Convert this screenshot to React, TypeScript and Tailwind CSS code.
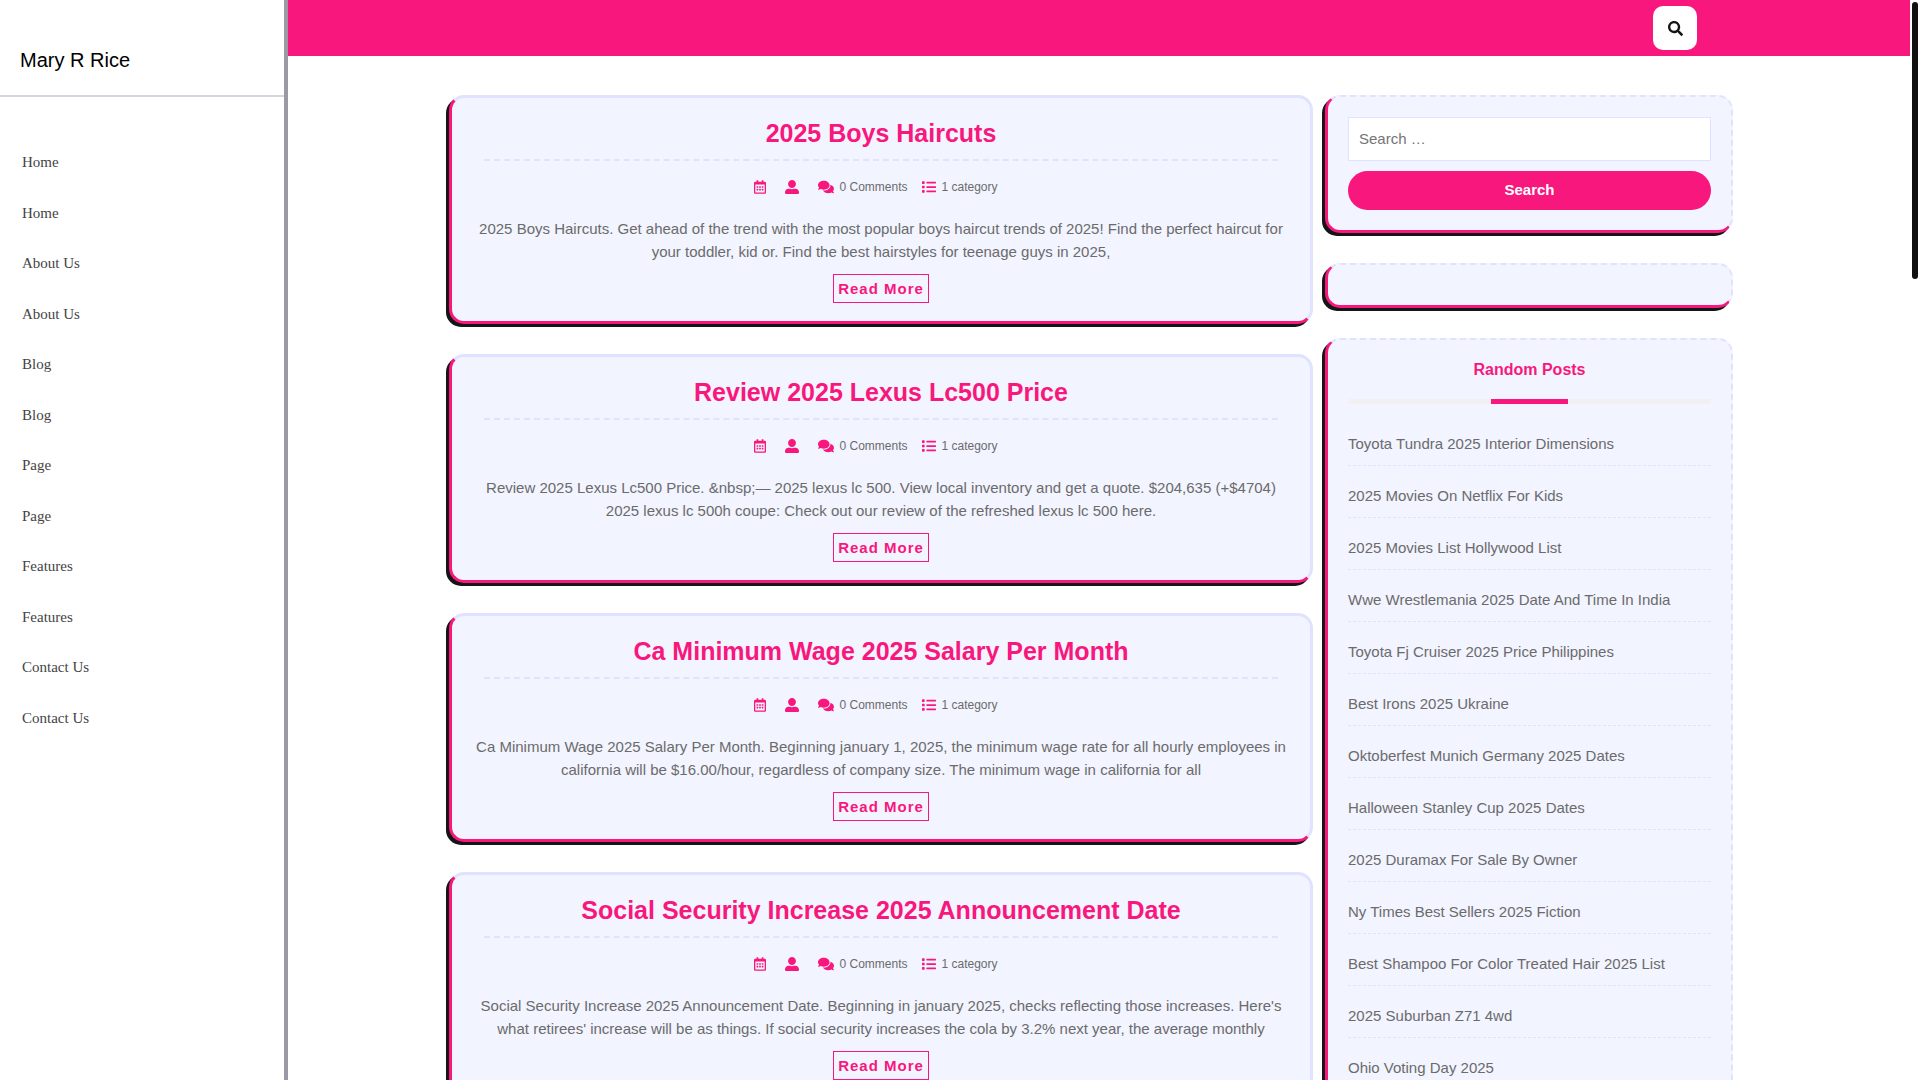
import React from "react";
import {
  FaComments,
  FaList,
  FaRegCalendarAlt,
  FaSearch,
  FaUserAlt,
} from "react-icons/fa";

const menu = ["Home", "About Us", "Blog", "Page", "Features", "Contact Us"];

const posts = [
  {
    title: "2025 Boys Haircuts",
    text: "2025 Boys Haircuts. Get ahead of the trend with the most popular boys haircut trends of 2025! Find the perfect haircut for your toddler, kid or. Find the best hairstyles for teenage guys in 2025,",
  },
  {
    title: "Review 2025 Lexus Lc500 Price",
    text: "Review 2025 Lexus Lc500 Price. &nbsp;— 2025 lexus lc 500. View local inventory and get a quote. $204,635 (+$4704) 2025 lexus lc 500h coupe: Check out our review of the refreshed lexus lc 500 here.",
  },
  {
    title: "Ca Minimum Wage 2025 Salary Per Month",
    text: "Ca Minimum Wage 2025 Salary Per Month. Beginning january 1, 2025, the minimum wage rate for all hourly employees in california will be $16.00/hour, regardless of company size. The minimum wage in california for all",
  },
  {
    title: "Social Security Increase 2025 Announcement Date",
    text: "Social Security Increase 2025 Announcement Date. Beginning in january 2025, checks reflecting those increases. Here's what retirees' increase will be as things. If social security increases the cola by 3.2% next year, the average monthly",
  },
];

const randomPosts = [
  "Toyota Tundra 2025 Interior Dimensions",
  "2025 Movies On Netflix For Kids",
  "2025 Movies List Hollywood List",
  "Wwe Wrestlemania 2025 Date And Time In India",
  "Toyota Fj Cruiser 2025 Price Philippines",
  "Best Irons 2025 Ukraine",
  "Oktoberfest Munich Germany 2025 Dates",
  "Halloween Stanley Cup 2025 Dates",
  "2025 Duramax For Sale By Owner",
  "Ny Times Best Sellers 2025 Fiction",
  "Best Shampoo For Color Treated Hair 2025 List",
  "2025 Suburban Z71 4wd",
  "Ohio Voting Day 2025",
];

function Sidebar() {
  return (
    <aside className="w-72 shrink-0 border-r-4 border-[#9c98a6]">
      <div className="border-b-2 border-[#d3d6e0] px-5 pt-[45px] pb-5">
        <a href="#" className="block text-xl leading-[30px] text-black">
          Mary R Rice
        </a>
      </div>
      <nav className="px-[22px] pt-10 font-['Liberation_Serif',serif] text-[15px] text-[#444]">
        <ul>
          {menu.map((item) => (
            <li key={item}>
              <a href="#" className="flex h-[51px] items-center">{item}</a>
              <a href="#" className="flex h-[50px] items-center">{item}</a>
            </li>
          ))}
        </ul>
      </nav>
    </aside>
  );
}

function PostCard({ title, text }: { title: string; text: string }) {
  return (
    <article className="rounded-[15px] border-[3px] border-[#e0e3ff] border-b-[#f8177d] border-l-[#f8177d] bg-[#f2f4ff] px-8 pt-[17px] pb-[18px] text-center shadow-[-3px_3px_0_0_#151515]">
      <h2 className="border-b-2 border-dashed border-[#e0e3ff] pb-2 text-[25px] leading-9 font-bold text-[#f8177d]">
        <a href="#">{title}</a>
      </h2>
      <div className="mt-4 flex h-5 items-center justify-center pr-[10px] text-xs">
        <FaRegCalendarAlt className="mr-[19px] h-[14px] w-3 text-[#f8177d]" />
        <FaUserAlt className="mr-[19px] size-[14px] text-[#f8177d]" />
        <FaComments className="mr-[5px] size-4 text-[#f8177d]" />
        <span className="mr-[15px]">0 Comments</span>
        <FaList className="mr-[5px] size-[14px] text-[#f8177d]" />
        <span>1 category</span>
      </div>
      <p className="-mx-3 mt-5 text-[15px] leading-[23px]">{text}</p>
      <a
        href="#"
        className="mx-auto mt-[11px] flex h-[29px] w-fit items-center border border-[#f8177d] px-1 pt-0.5 text-[15px] font-bold tracking-[1px] text-[#f8177d]"
      >
        Read More
      </a>
    </article>
  );
}

function Widget({ children, label }: { children?: React.ReactNode; label: string }) {
  return (
    <section
      aria-label={label}
      className="rounded-[15px] border-t-2 border-r-2 border-b-[3px] border-l-[3px] border-t-[#e0e3ff] border-r-[#e0e3ff] border-b-[#f8177d] border-l-[#f8177d] bg-[#f2f4ff] p-5 shadow-[-3px_3px_0_0_#151515] [border-style:dashed_dashed_solid_solid]"
    >
      {children}
    </section>
  );
}

export default function App() {
  return (
    <div className="flex h-screen overflow-hidden bg-white pr-[10px] font-['Liberation_Sans',Arial,sans-serif] text-[#6b6b6b]">
      <Sidebar />
      <div className="min-w-0 flex-1 overflow-y-auto [scrollbar-width:none]">
        <header className="bg-[#f8177d]">
          <div className="mx-auto flex max-w-[1320px] justify-end py-1.5 pr-[62px]">
            <button
              type="button"
              aria-label="Open search"
              className="flex size-11 items-center justify-center rounded-[10px] bg-white text-[#151515]"
            >
              <FaSearch className="size-[15px]" />
            </button>
          </div>
        </header>
        <main className="mx-auto flex max-w-[1320px] items-start gap-3 pt-[39px] pr-[26px] pb-10 pl-[10px]">
          <div className="flex min-w-0 flex-1 flex-col gap-[30px]">
            {posts.map((post) => (
              <PostCard key={post.title} title={post.title} text={post.text} />
            ))}
          </div>
          <div className="flex w-[408px] shrink-0 flex-col gap-[30px]">
            <Widget label="Search">
              <form onSubmit={(e) => e.preventDefault()}>
                <input
                  type="search"
                  aria-label="Search for"
                  placeholder="Search …"
                  className="block h-11 w-full border border-[#e0e3ff] bg-white px-[10px] pb-0.5 text-[15px] placeholder:text-[#757575]"
                />
                <button
                  type="submit"
                  className="mt-[10px] block h-[39px] w-full rounded-full bg-[#f8177d] text-[15px] font-bold text-white"
                >
                  Search
                </button>
              </form>
            </Widget>
            <Widget label="Advertisement" />
            <Widget label="Random Posts">
              <h3 className="text-center text-base leading-5 font-bold text-[#f8177d]">
                Random Posts
              </h3>
              <div className="mt-[19px] h-[5px] bg-[#f1f1f1]">
                <div className="mx-auto h-full w-[77px] bg-[#f8177d]" />
              </div>
              <ul className="mt-[10px] text-[15px]">
                {randomPosts.map((title) => (
                  <li
                    key={title}
                    className="border-b border-dashed border-[#e0e3ff] pt-[18px] pb-[10px] leading-[23px]"
                  >
                    <a href="#">{title}</a>
                  </li>
                ))}
              </ul>
            </Widget>
          </div>
        </main>
      </div>
      <div className="fixed top-0.5 right-0.5 h-[277px] w-1.5 rounded-full bg-[#111]" />
    </div>
  );
}
